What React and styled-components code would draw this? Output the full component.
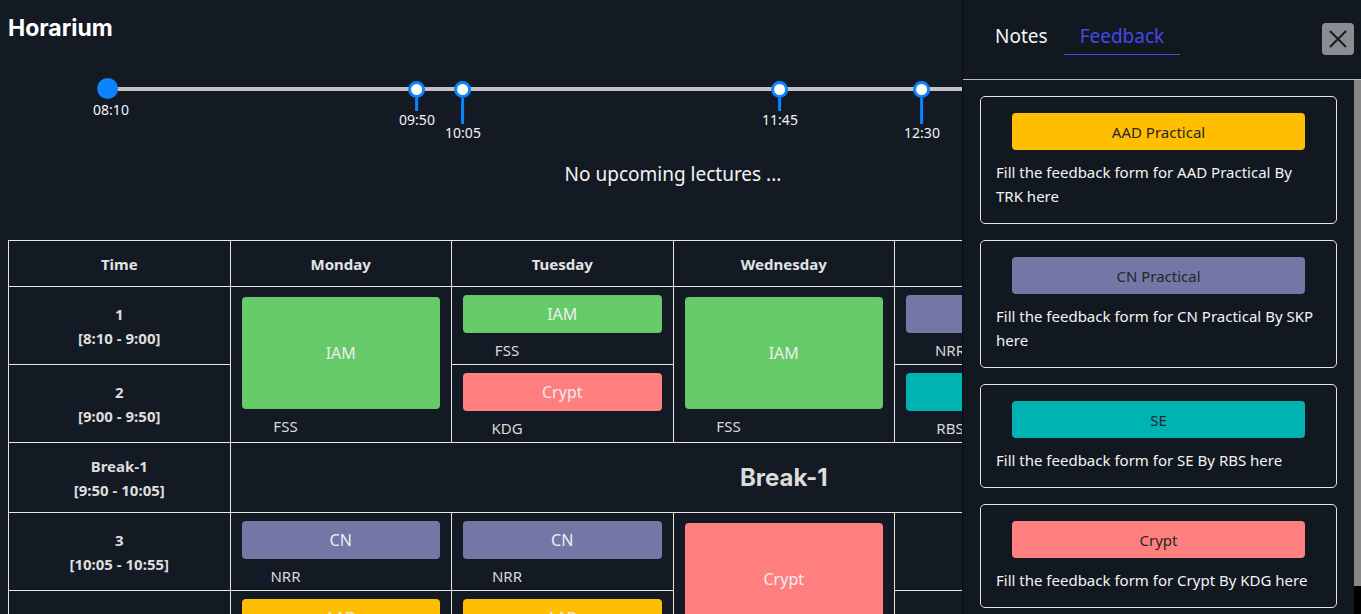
import React from "react";
import styled, { createGlobalStyle } from "styled-components";

const GlobalStyle = createGlobalStyle`
  html, body {
    margin: 0;
    padding: 0;
    background: #131a24;
    overflow: hidden;
  }
  body {
    font-family: "Noto Sans", "Open Sans", sans-serif;
    color: #f1f1f1;
  }
`;

const subjectColor = {
  IAM: "#65cb68",
  Crypt: "#ff7f7f",
  CN: "#7377a5",
  SE: "#00b3b3",
  AAD: "#ffbf00",
};

const Page = styled.main`
  padding: 0 23px 0 8px;
`;

const Title = styled.h1`
  margin: 0;
  padding-top: 14px;
  font-family: "Inter", "Liberation Sans", sans-serif;
  font-size: 23px;
  line-height: 28px;
  font-weight: 700;
  color: #ffffff;
`;

const Track = styled.div`
  position: relative;
  height: 100px;
  padding-top: 45px;
  box-sizing: border-box;
`;

const Line = styled.div`
  margin-left: 100px;
  height: 4px;
  background: #c2c2c2;
`;

const Marker = styled.div`
  position: absolute;
  top: ${(p) => (p.$start ? 36 : 39)}px;
  transform: translateX(-50%);
  display: flex;
  flex-direction: column;
  align-items: center;
`;

const Dot = styled.span`
  display: block;
  box-sizing: border-box;
  width: ${(p) => (p.$start ? 21 : 17)}px;
  height: ${(p) => (p.$start ? 21 : 17)}px;
  border-radius: 50%;
  background: ${(p) => (p.$start ? "#0a84ff" : "#ffffff")};
  border: ${(p) => (p.$start ? "none" : "3px solid #0a84ff")};
`;

const Stem = styled.span`
  display: block;
  width: 3px;
  height: ${(p) => (p.$long ? 26 : 13)}px;
  background: #0a84ff;
`;

const TimeLabel = styled.span`
  font-size: 14px;
  line-height: 17px;
  color: #f4f4f4;
  white-space: nowrap;
  margin: ${(p) => (p.$start ? "2px 0 0 6px" : "0")};
`;

const Message = styled.p`
  margin: 18px 0 0;
  text-align: center;
  font-size: 19px;
  line-height: 28px;
  color: #f4f4f4;
`;

const Table = styled.table`
  margin-top: 52px;
  width: 100%;
  table-layout: fixed;
  border-collapse: collapse;
`;

const Head = styled.th`
  border: 1px solid #e6e6e6;
  padding: 11px 11px 10px;
  font-size: 15px;
  line-height: 24px;
  font-weight: 700;
  color: #e4e4e4;
  text-align: center;
`;

const TimeCell = styled.td`
  border: 1px solid #e6e6e6;
  padding: 11px 11px 10px;
  font-size: 15px;
  line-height: 24px;
  font-weight: 700;
  color: #dedede;
  text-align: center;
  vertical-align: middle;
`;

const SlotCell = styled.td`
  border: 1px solid #e6e6e6;
  padding: 8px 11px 4px;
  vertical-align: middle;
`;

const BreakCell = styled.td`
  border: 1px solid #e6e6e6;
  text-align: center;
  vertical-align: middle;
  font-family: "Inter", "Liberation Sans", sans-serif;
  font-size: 24px;
  font-weight: 700;
  color: #dcdcdc;
`;

const Block = styled.div`
  height: ${(p) => (p.$tall ? 112 : 38)}px;
  border-radius: 4px;
  background: ${(p) => p.$color};
  display: flex;
  align-items: center;
  justify-content: center;
  font-size: 16px;
  color: #eeeeee;
`;

const Faculty = styled.div`
  width: 88px;
  margin-top: 7px;
  text-align: center;
  font-size: 15px;
  line-height: 20px;
  color: #d8d8d8;
`;

const Drawer = styled.aside`
  position: fixed;
  top: 0;
  right: 0;
  bottom: 0;
  width: 399px;
  box-sizing: border-box;
  background: #111820;
  border-left: 1px solid #0a0e14;
  display: flex;
  flex-direction: column;
`;

const DrawerHead = styled.div`
  display: flex;
  align-items: flex-start;
  height: 80px;
  box-sizing: border-box;
  padding: 19px 7px 0 16px;
  border-bottom: 1px solid #bcbcbc;
`;

const Tab = styled.div`
  height: 36px;
  box-sizing: border-box;
  padding: 0 16px;
  font-size: 19px;
  line-height: 35px;
  color: ${(p) => (p.$active ? "#4848e6" : "#f4f4f4")};
  border-bottom: 1px solid ${(p) => (p.$active ? "#4848e6" : "transparent")};
`;

const Close = styled.button`
  margin: 4px 0 0 auto;
  width: 32px;
  height: 32px;
  padding: 0;
  border: none;
  border-radius: 4px;
  background: #8a8d92;
  display: flex;
  align-items: center;
  justify-content: center;
`;

const DrawerBody = styled.div`
  flex: 1;
  min-height: 0;
  display: flex;
  overflow: hidden;
`;

const CardList = styled.div`
  flex: 1;
  padding: 16px 17px 0;
`;

const Rail = styled.div`
  width: 7px;
  display: flex;
  flex-direction: column;
  background: #000000;
`;

const Thumb = styled.div`
  height: 506px;
  background: #888888;
`;

const Card = styled.div`
  border: 1px solid #e4e4e4;
  border-radius: 5px;
  padding: 16px 15px 15px;
  margin-bottom: 16px;
`;

const Pill = styled.div`
  width: 90%;
  height: 37px;
  margin: 0 auto;
  border-radius: 4px;
  background: ${(p) => p.$color};
  display: flex;
  align-items: center;
  justify-content: center;
  font-size: 15px;
  color: #262626;
`;

const CardText = styled.p`
  margin: 10px 0 0;
  font-size: 15px;
  line-height: 24px;
  color: #f4f4f4;
`;

const markers = [
  { time: "08:10", x: 108, start: true },
  { time: "09:50", x: 417 },
  { time: "10:05", x: 463, long: true },
  { time: "11:45", x: 780 },
  { time: "12:30", x: 922, long: true },
  { time: "13:15", x: 1062 },
];

const feedback = [
  { subject: "AAD Practical", color: "AAD", by: "TRK" },
  { subject: "CN Practical", color: "CN", by: "SKP" },
  { subject: "SE", color: "SE", by: "RBS" },
  { subject: "Crypt", color: "Crypt", by: "KDG" },
];

function Slot({ subject, faculty, span }) {
  return (
    <SlotCell rowSpan={span}>
      <Block $color={subjectColor[subject]} $tall={span === 2}>
        {subject}
      </Block>
      <Faculty>{faculty}</Faculty>
    </SlotCell>
  );
}

function CloseIcon() {
  return (
    <svg width="20" height="20" viewBox="0 0 20 20">
      <path d="M2 2 L18 18 M18 2 L2 18" stroke="#1c1c1c" strokeWidth="2" />
    </svg>
  );
}

export default function App() {
  return (
    <>
      <GlobalStyle />
      <Page>
        <Title>Horarium</Title>
        <Track>
          <Line />
          {markers.map((m) => (
            <Marker key={m.time} $start={m.start} style={{ left: m.x - 8 }}>
              <Dot $start={m.start} />
              {!m.start && <Stem $long={m.long} />}
              <TimeLabel $start={m.start}>{m.time}</TimeLabel>
            </Marker>
          ))}
        </Track>
        <Message>No upcoming lectures ...</Message>
        <Table>
          <thead>
            <tr>
              <Head>Time</Head>
              <Head>Monday</Head>
              <Head>Tuesday</Head>
              <Head>Wednesday</Head>
              <Head>Thursday</Head>
              <Head>Friday</Head>
            </tr>
          </thead>
          <tbody>
            <tr>
              <TimeCell>
                1<br />[8:10 - 9:00]
              </TimeCell>
              <Slot subject="IAM" faculty="FSS" span={2} />
              <Slot subject="IAM" faculty="FSS" />
              <Slot subject="IAM" faculty="FSS" span={2} />
              <Slot subject="CN" faculty="NRR" />
              <Slot subject="SE" faculty="RBS" />
            </tr>
            <tr>
              <TimeCell>
                2<br />[9:00 - 9:50]
              </TimeCell>
              <Slot subject="Crypt" faculty="KDG" />
              <Slot subject="SE" faculty="RBS" />
              <Slot subject="CN" faculty="NRR" />
            </tr>
            <tr>
              <TimeCell>
                Break-1<br />[9:50 - 10:05]
              </TimeCell>
              <BreakCell colSpan={5}>Break-1</BreakCell>
            </tr>
            <tr>
              <TimeCell>
                3<br />[10:05 - 10:55]
              </TimeCell>
              <Slot subject="CN" faculty="NRR" />
              <Slot subject="CN" faculty="NRR" />
              <Slot subject="Crypt" faculty="KDG" span={2} />
              <SlotCell />
              <Slot subject="IAM" faculty="FSS" />
            </tr>
            <tr>
              <TimeCell>
                4<br />[10:55 - 11:45]
              </TimeCell>
              <Slot subject="AAD" faculty="TRK" />
              <Slot subject="AAD" faculty="TRK" />
              <SlotCell />
              <Slot subject="Crypt" faculty="KDG" />
            </tr>
          </tbody>
        </Table>
      </Page>
      <Drawer>
        <DrawerHead>
          <Tab>Notes</Tab>
          <Tab $active>Feedback</Tab>
          <Close aria-label="close">
            <CloseIcon />
          </Close>
        </DrawerHead>
        <DrawerBody>
          <CardList>
            {feedback.map((f) => (
              <Card key={f.subject}>
                <Pill $color={subjectColor[f.color]}>{f.subject}</Pill>
                <CardText>
                  Fill the feedback form for {f.subject} By {f.by} here
                </CardText>
              </Card>
            ))}
          </CardList>
          <Rail>
            <Thumb />
          </Rail>
        </DrawerBody>
      </Drawer>
    </>
  );
}
